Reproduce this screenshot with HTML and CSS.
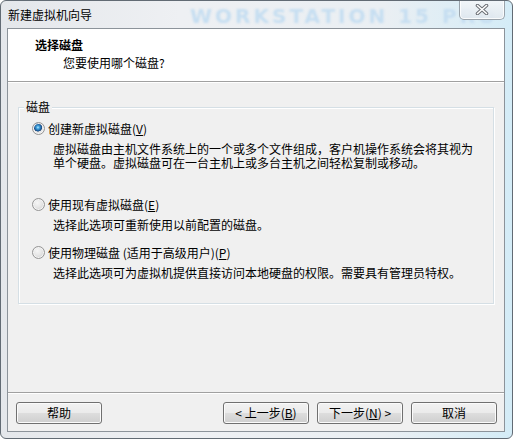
FILE: index.html
```html
<!DOCTYPE html>
<html lang="zh-CN">
<head>
<meta charset="utf-8">
<title>新建虚拟机向导</title>
<link rel="stylesheet" href="styles.css">
</head>
<body>
<div class="window">
  <div class="titlebar">
    <span class="title">新建虚拟机向导</span>
    <span class="watermark">WORKSTATION 15 PRO</span>
    <div class="close">
      <svg width="14" height="11" viewBox="0 0 14 11">
        <path d="M2.5 1.5 L11.5 9.5 M11.5 1.5 L2.5 9.5" stroke="#6b6f75" stroke-width="3.6" stroke-linecap="round" fill="none"/>
        <path d="M2.5 1.5 L11.5 9.5 M11.5 1.5 L2.5 9.5" stroke="#ffffff" stroke-width="1.6" stroke-linecap="round" fill="none"/>
      </svg>
    </div>
  </div>
  <div class="client">
    <div class="header">
      <div class="h-title">选择磁盘</div>
      <div class="h-sub">您要使用哪个磁盘?</div>
    </div>
    <div class="body">
      <fieldset class="group">
        <legend>磁盘</legend>
        <div class="option">
          <div class="radio-row"><span class="radio checked"></span><span>创建新虚拟磁盘(<u>V</u>)</span></div>
          <div class="desc tall"><div class="line">虚拟磁盘由主机文件系统上的一个或多个文件组成，客户机操作系统会将其视为</div><div class="line">单个硬盘。虚拟磁盘可在一台主机上或多台主机之间轻松复制或移动。</div></div>
        </div>
        <div class="option">
          <div class="radio-row"><span class="radio"></span><span>使用现有虚拟磁盘(<u>E</u>)</span></div>
          <div class="desc">选择此选项可重新使用以前配置的磁盘。</div>
        </div>
        <div class="option">
          <div class="radio-row"><span class="radio"></span><span>使用物理磁盘 (适用于高级用户)(<u>P</u>)</span></div>
          <div class="desc">选择此选项可为虚拟机提供直接访问本地硬盘的权限。需要具有管理员特权。</div>
        </div>
      </fieldset>
    </div>
    <div class="footer">
      <button class="btn">帮助</button>
      <div class="spacer"></div>
      <button class="btn">&lt; 上一步(<u>B</u>)</button>
      <button class="btn gap">下一步(<u>N</u>) &gt;</button>
      <button class="btn gap">取消</button>
    </div>
  </div>
</div>
</body>
</html>
```

FILE: styles.css
```css
* { box-sizing: border-box; }
html, body { margin: 0; padding: 0; }
body {
  width: 513px;
  height: 439px;
  overflow: hidden;
  background: #ffffff;
  font-family: "Noto Sans CJK SC", "Noto Sans", sans-serif;
  font-size: 12px;
  color: #000;
}
.window {
  position: relative;
  width: 513px;
  height: 439px;
  display: flex;
  flex-direction: column;
  border: 1px solid #626b74;
  border-radius: 6px;
  padding: 0 7px 6px 6px;
  overflow: hidden;
  background: linear-gradient(90deg, #e4e7eb 0%, #eef0f3 35%, #eaeff3 75%, #d4ecf7 100%);
}
.titlebar {
  height: 27px;
  display: flex;
  align-items: center;
  padding-left: 1px;
  white-space: nowrap;
}
.title { line-height: 15px; }
.watermark {
  margin-left: 98px;
  font-family: "DejaVu Sans", sans-serif;
  font-weight: bold;
  font-size: 20px;
  letter-spacing: 3px;
  color: #c6def1;
  filter: blur(0.9px);
  line-height: 20px;
  margin-top: 3px;
}
.close {
  position: absolute;
  top: -1px;
  right: 7px;
  width: 46px;
  height: 20px;
  display: flex;
  align-items: center;
  justify-content: center;
  border: 1px solid #9aa3ab;
  border-top: none;
  border-radius: 0 0 5px 5px;
  background: linear-gradient(rgba(246,248,250,0.85), rgba(226,232,238,0.85));
  box-shadow: inset 0 0 0 1px rgba(255,255,255,0.8);
}
.client {
  flex: 1;
  display: flex;
  flex-direction: column;
  border: 1px solid #8c939a;
  background: #f0f0f0;
}
.header {
  height: 53px;
  background: #ffffff;
  border-bottom: 1px solid #a0a0a0;
  padding: 8px 0 0 27px;
}
.h-title { font-weight: bold; line-height: 15px; }
.h-sub { line-height: 15px; margin-top: 3px; padding-left: 28px; }
.body {
  flex: 1;
  padding: 17px 10px 0 10px;
  border-top: 1px solid #ffffff;
}
.group {
  margin: 0;
  padding: 0 0 23px 0;
  border: 1px solid #d5dfe5;
  box-shadow: inset 1px 1px 0 #ffffff, 1px 1px 0 #ffffff;
}
.group legend {
  margin-left: 5px;
  padding: 0 2px;
  line-height: 14px;
  background: #f0f0f0;
}
.option { padding-left: 13px; }
.option + .option { margin-top: 13px; }
.radio-row {
  display: flex;
  align-items: center;
  line-height: 15px;
  margin-top: 7px;
}
.option + .option .radio-row { margin-top: 0; }
.radio {
  width: 13px;
  height: 13px;
  margin-right: 3px;
  border-radius: 50%;
  border: 1px solid #959595;
  background: radial-gradient(circle at 40% 35%, #f6f6f6 0, #e6e6e6 45%, #c8c8c8 100%);
  box-shadow: inset 0 0 0 1px #f4f4f4;
}
.radio.checked {
  background: radial-gradient(circle at 45% 40%, #bfe9ff 0, #45a9e2 1.4px, #1b5d9c 3.3px, #22487a 3.9px, #e8e8e8 4.4px, #d2d2d2 100%);
}
.desc {
  margin-top: 6px;
  padding-left: 21px;
  line-height: 14px;
  white-space: nowrap;
}
.desc .line { height: 14px; }
.desc.tall { min-height: 42px; }
.footer {
  height: 39px;
  display: flex;
  align-items: flex-start;
  padding: 9px 7px 0 8px;
  border-top: 1px solid #a0a0a0;
  box-shadow: inset 0 1px 0 #ffffff;
}
.spacer { flex: 1; }
.btn {
  width: 86px;
  height: 22px;
  padding: 0;
  font-family: inherit;
  font-size: 12px;
  color: #000;
  border: 1px solid #707070;
  border-radius: 3px;
  background: linear-gradient(#f2f2f2 0%, #ebebeb 48%, #dddddd 52%, #cfcfcf 100%);
  box-shadow: inset 0 0 0 1px #fbfbfb;
  line-height: 18px;
}
.btn.gap { margin-left: 8px; }
u { text-decoration: underline; text-underline-offset: 1px; }
```
